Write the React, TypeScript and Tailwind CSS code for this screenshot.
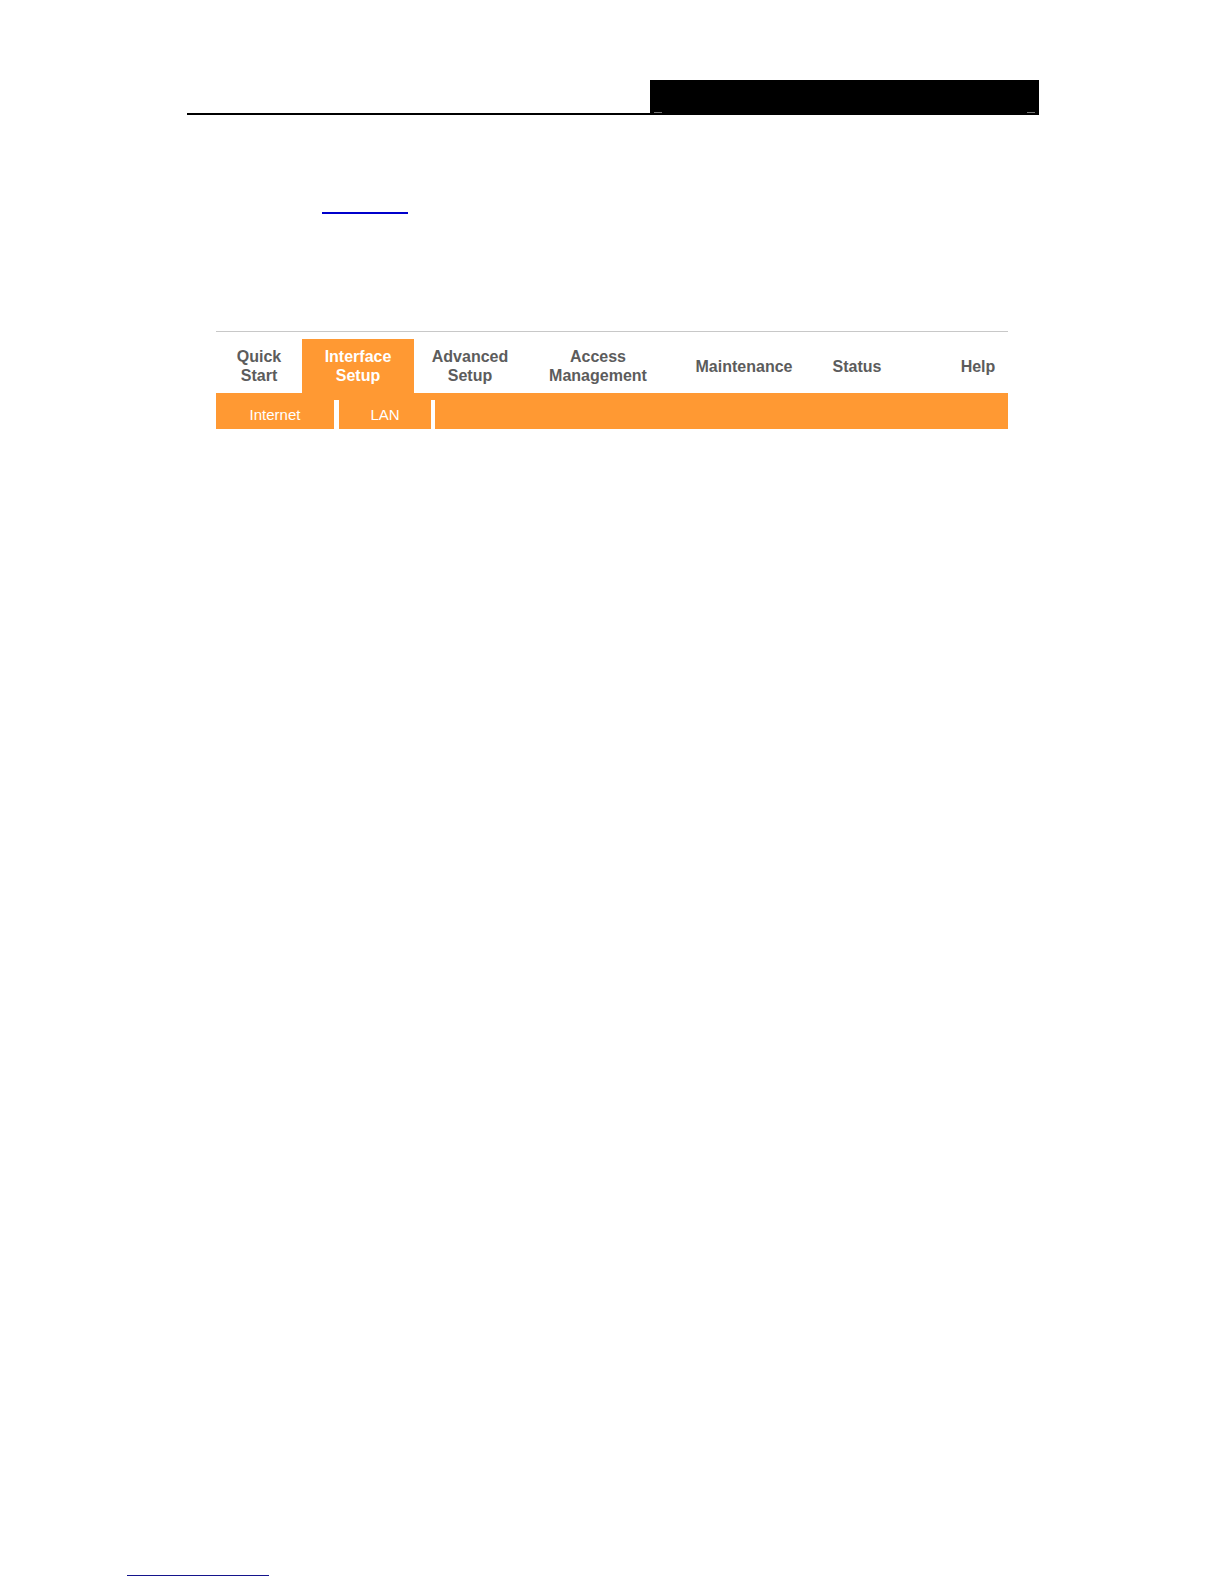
import React from 'react'

const tabs = [
  { label: ['Quick', 'Start'], width: 'w-[86px]' },
  { label: ['Interface', 'Setup'], width: 'w-[112px]', active: true },
  { label: ['Advanced', 'Setup'], width: 'w-[112px]' },
  { label: ['Access', 'Management'], width: 'w-[144px]' },
  { label: ['Maintenance'], width: 'w-[148px]' },
  { label: ['Status'], width: 'w-[78px]' },
]

function Tab({ label, width, active }: { label: string[]; width: string; active?: boolean }) {
  return (
    <div
      className={`${width} h-full flex flex-col items-center justify-center text-center font-bold text-[16px] leading-[19px] ${
        active ? 'bg-[#ff9933] text-white' : 'text-[#5c5c5c]'
      }`}
    >
      {label.map((line) => (
        <span key={line}>{line}</span>
      ))}
    </div>
  )
}

export default function App() {
  return (
    <div
      className="w-[1224px] h-[1584px] bg-white flex flex-col"
      style={{ fontFamily: '"Liberation Sans", Arial, sans-serif' }}
    >
      {/* page header rule with black block */}
      <div className="mt-[80px] ml-[187px] w-[852px] h-[35px] flex items-end">
        <div className="flex-1 h-[2px] bg-black" />
        <div className="w-[389px] h-[35px] bg-black flex items-end justify-between px-[4px] pb-[2px]">
          <div className="w-[8px] h-[1px] bg-[#777]" />
          <div className="w-[8px] h-[1px] bg-[#777]" />
        </div>
      </div>

      {/* underlined link */}
      <div className="mt-[97px] ml-[322px] w-[86px] h-[2px] bg-[#0000cc]" />

      {/* router menu */}
      <div className="mt-[117px] ml-[216px] w-[792px] flex flex-col">
        <div className="h-[1px] bg-[#c8c8c8]" />
        <div className="mt-[7px] h-[54px] flex">
          {tabs.map((t) => (
            <Tab key={t.label.join(' ')} label={t.label} width={t.width} active={t.active} />
          ))}
          <div className="flex-1" />
          <Tab label={['Help']} width="w-[60px]" />
        </div>
        <div className="h-[36px] bg-[#ff9933] flex text-white text-[15px]">
          <div className="w-[118px] flex items-center justify-center pt-[9px]">Internet</div>
          <div className="w-[5px] bg-white mt-[7px]" />
          <div className="w-[92px] flex items-center justify-center pt-[9px]">LAN</div>
          <div className="w-[4px] bg-white mt-[7px]" />
          <div className="flex-1" />
        </div>
      </div>

      {/* footer link underline */}
      <div className="mt-auto mb-[8px] ml-[127px] w-[142px] h-[1px] bg-[#14148c]" />
    </div>
  )
}
